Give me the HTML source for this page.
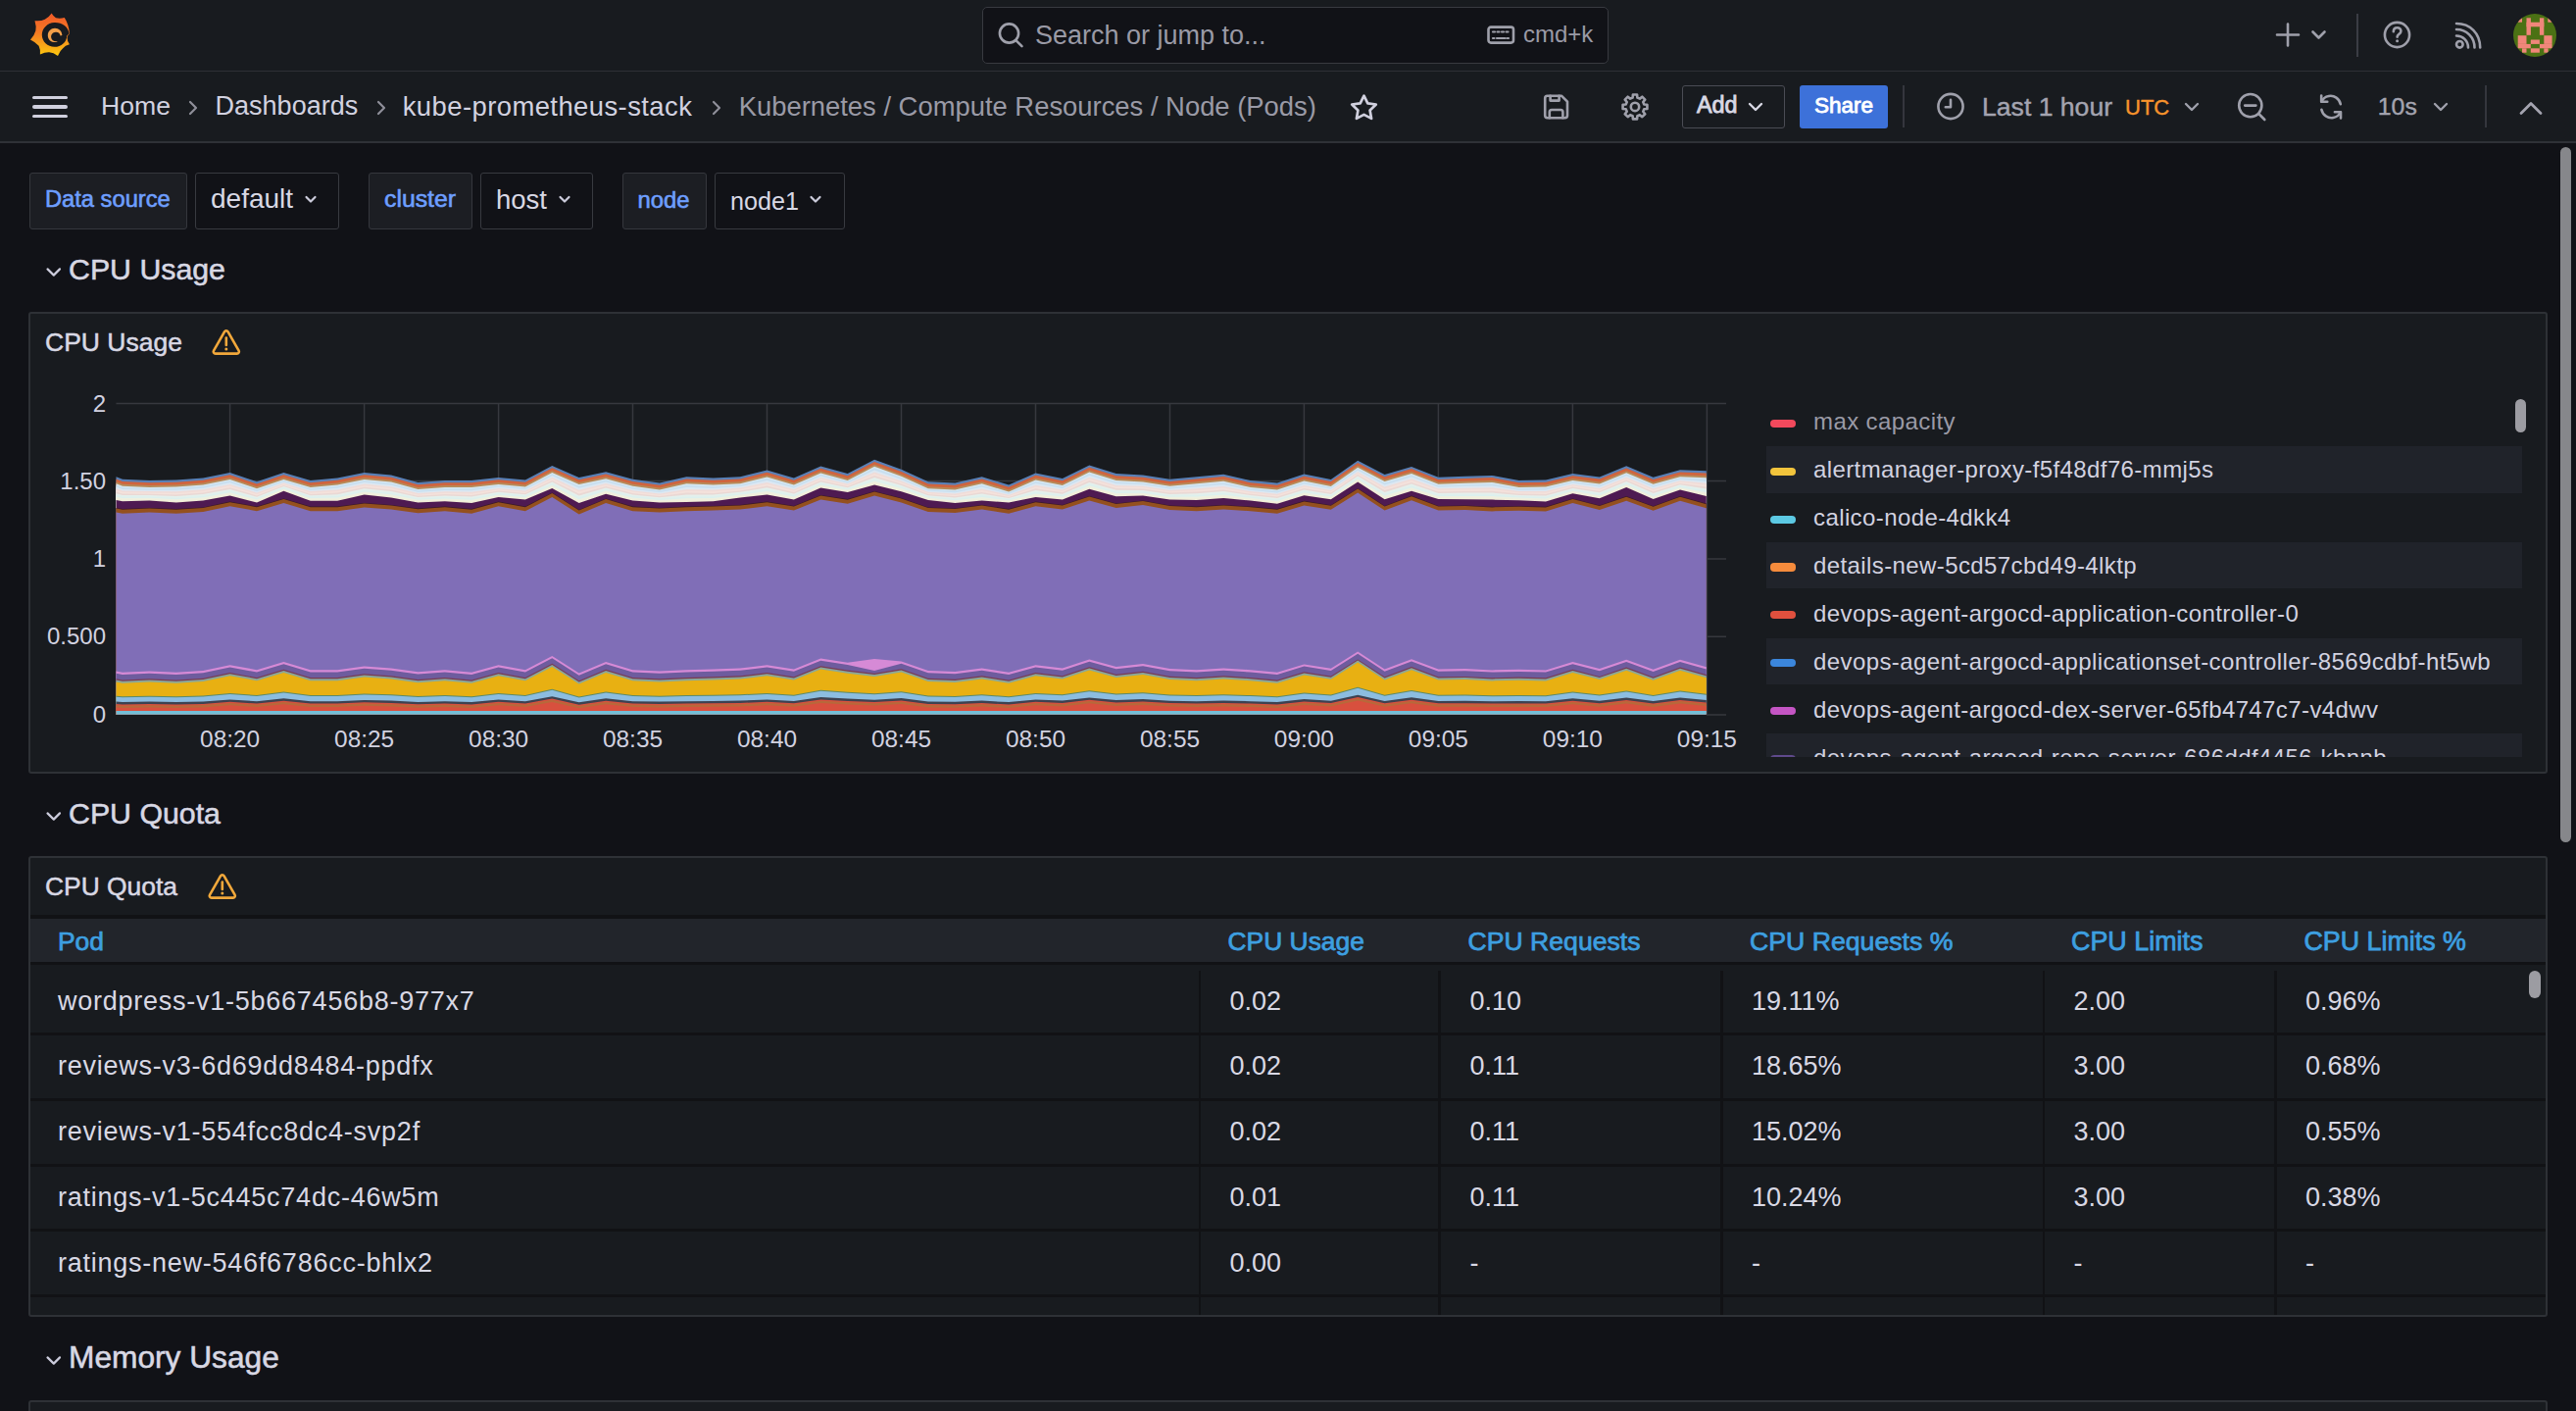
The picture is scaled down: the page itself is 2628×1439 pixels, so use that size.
<!DOCTYPE html>
<html><head><meta charset="utf-8">
<style>
*{box-sizing:border-box;margin:0;padding:0}
html,body{width:2628px;height:1439px;overflow:hidden;background:#111217}
body{position:relative;font-family:"Liberation Sans",sans-serif;color:#ccccdc}
.a{position:absolute;white-space:pre}
.t{position:absolute;white-space:pre;line-height:1}
svg{position:absolute;overflow:visible}
.bar{position:absolute;left:0;width:2628px;background:#181b1f}
.ic{fill:none;stroke:#9fa0ab;stroke-width:2.6;stroke-linecap:round;stroke-linejoin:round}
</style></head><body>
<!-- top bar -->
<div class="bar" style="top:0;height:72px"></div>
<div class="a" style="left:0;top:71.5px;width:2628px;height:1.5px;background:#2e3036"></div>
<div class="bar" style="top:73px;height:72px"></div>
<div class="a" style="left:0;top:144.2px;width:2628px;height:2px;background:#2f3137"></div>

<svg style="left:0;top:0" width="100" height="72" viewBox="0 0 100 72">
<defs><linearGradient id="lg" x1="0" y1="0" x2="0" y2="1"><stop offset="0" stop-color="#f05a28"/><stop offset="0.45" stop-color="#f47a24"/><stop offset="1" stop-color="#fbc80e"/></linearGradient></defs>
<path d="M52.6,13.6 Q54.7,17.2 57.0,18.2 Q60.9,19.2 65.8,18.0 C68.6,22.5 70.6,28 70.9,34.6 Q68.4,36.5 68.6,38.4 Q68.4,41.4 70.9,45.2 Q66.4,46.4 64.2,49.2 Q60.9,51.8 59.0,56.9 Q54.5,53.6 50.2,53.2 Q46.1,53.0 40.9,55.6 Q41.3,50.1 39.6,46.8 Q36.7,43.1 31.0,40.4 Q35.2,35.9 36.4,31.2 Q37.3,27.1 35.5,21.2 Q41.6,21.8 45.8,19.8 Q49.5,18.3 52.6,13.6Z" fill="url(#lg)"/>
<path d="M70.6,34.2 C69.4,27 63.4,22.8 55.6,23 C48.4,23.2 42.8,29 42.8,35.6 C42.8,42.6 48.6,47.8 55.6,47.8 C62.4,47.8 68.2,42.8 68.2,36.4 Z" fill="#181b1f"/>
<path d="M58.4,42.8 C54,44 49,41.4 48.8,36.4 C48.6,32 52,28.8 56,28.8 C60,28.8 63.2,31.8 63.4,36 L61.6,36.4 C61.2,34.4 59.6,32.6 56.8,32.8 C53.8,33 51.8,35.6 52.2,38.2 C52.6,41 55.4,42.8 58.4,42.2 Z" fill="#f3a04a"/>
</svg>

<!-- search box -->
<div class="a" style="left:1002px;top:7px;width:639px;height:58px;background:#111217;border:1.5px solid #383a40;border-radius:5px"></div>
<svg style="left:1016px;top:21px" width="32" height="32" viewBox="0 0 32 32"><circle cx="13.5" cy="13" r="9.6" class="ic" stroke-width="2.8"/><path d="M20.6,20.3 L26.5,26.2" class="ic" stroke-width="2.8"/></svg>
<div class="t" style="left:1056px;top:23px;font-size:27px;color:#9a9aa6">Search or jump to...</div>
<svg style="left:1515px;top:25px" width="32" height="22" viewBox="0 0 32 22">
<rect x="3.5" y="2.6" width="25.5" height="16" rx="2.5" class="ic" stroke-width="2.4"/>
<path d="M8,7.5h2 M12.5,7.5h2 M17,7.5h2 M21.5,7.5h2 M8,14h1.5 M12,14h8.5 M22.5,14h1.5" stroke="#9fa0ab" stroke-width="2.2" stroke-linecap="round"/>
</svg>
<div class="t" style="left:1554px;top:22.5px;font-size:24px;color:#9a9aa6">cmd+k</div>

<!-- right icons -->
<svg style="left:2318px;top:18px" width="60" height="36" viewBox="0 0 60 36">
<path d="M16,6.5 V28.5 M5,17.5 H27" class="ic" stroke-width="2.8"/>
<path d="M41.5,14.5 L47.5,20.5 L53.5,14.5" class="ic" stroke-width="2.6"/>
</svg>
<div class="a" style="left:2404px;top:14px;width:1.5px;height:44px;background:#3b3d44"></div>
<svg style="left:2428px;top:18px" width="36" height="36" viewBox="0 0 36 36">
<circle cx="17.5" cy="17.5" r="12.6" class="ic" stroke-width="2.6"/>
<path d="M13.8,14.2 C13.8,11.6 15.6,10.3 17.6,10.3 C19.8,10.3 21.4,11.8 21.4,13.7 C21.4,16.6 17.8,16.8 17.6,19.6" class="ic" stroke-width="2.5"/>
<circle cx="17.6" cy="23.8" r="1.5" fill="#9fa0ab"/>
</svg>
<svg style="left:2500px;top:20px" width="36" height="34" viewBox="0 0 36 34">
<circle cx="9.3" cy="25.3" r="3.3" class="ic" stroke-width="2.6"/>
<path d="M6,16.5 C12.5,16.5 18,21.5 18,28.5" class="ic" stroke-width="2.6"/>
<path d="M6,10 C16.5,10 24.5,18 24.5,28.5" class="ic" stroke-width="2.6"/>
<path d="M6,4 C20,4 30.2,14 30.2,28.5" class="ic" stroke-width="2.6"/>
</svg>
<svg style="left:2564px;top:13.6px" width="44" height="44" viewBox="0 0 44 44">
<defs><clipPath id="av"><circle cx="22" cy="22" r="22"/></clipPath></defs>
<g clip-path="url(#av)">
<rect width="44" height="44" fill="#4b7114"/>
<g fill="#f0867a"><rect x="4.7" y="4.3" width="4.3" height="4.4"/><rect x="35.3" y="4.3" width="4.3" height="4.4"/><rect x="13.5" y="4.3" width="4.4" height="17.5"/><rect x="26.9" y="4.3" width="4.4" height="17.5"/><rect x="13.5" y="8.7" width="17.8" height="4.6"/><rect x="4.7" y="22.2" width="8.8" height="8.7"/><rect x="31.3" y="22.2" width="8.3" height="8.7"/><rect x="17.8" y="26.5" width="9.1" height="4.4"/><rect x="4.7" y="30.9" width="13.1" height="4.4"/><rect x="26.9" y="30.9" width="12.7" height="4.4"/><rect x="9" y="35.3" width="4.5" height="4.4"/><rect x="17.8" y="35.3" width="9.1" height="4.4"/><rect x="31.3" y="35.3" width="4.3" height="4.4"/>
</g></g>
</svg>


<!-- hamburger -->
<div class="a" style="left:33px;top:97.5px;width:36px;height:3.6px;background:#d0d0de;border-radius:2px"></div>
<div class="a" style="left:33px;top:107px;width:36px;height:3.6px;background:#d0d0de;border-radius:2px"></div>
<div class="a" style="left:33px;top:116.5px;width:36px;height:3.6px;background:#d0d0de;border-radius:2px"></div>
<div class="t" style="left:103px;top:94.6px;font-size:26.6px;color:#d2d2e0">Home</div>
<svg style="left:190px;top:100px" width="14" height="20" viewBox="0 0 14 20"><path d="M4,4 L10,10 L4,16" fill="none" stroke="#8e8f99" stroke-width="2.2" stroke-linecap="round" stroke-linejoin="round"/></svg>
<div class="t" style="left:219.6px;top:94.6px;font-size:27px;color:#d2d2e0">Dashboards</div>
<svg style="left:382px;top:100px" width="14" height="20" viewBox="0 0 14 20"><path d="M4,4 L10,10 L4,16" fill="none" stroke="#8e8f99" stroke-width="2.2" stroke-linecap="round" stroke-linejoin="round"/></svg>
<div class="t" style="left:410.7px;top:94.6px;font-size:27.4px;letter-spacing:0.45px;color:#d2d2e0">kube-prometheus-stack</div>
<svg style="left:724px;top:100px" width="14" height="20" viewBox="0 0 14 20"><path d="M4,4 L10,10 L4,16" fill="none" stroke="#8e8f99" stroke-width="2.2" stroke-linecap="round" stroke-linejoin="round"/></svg>
<div class="t" style="left:753.7px;top:94.6px;font-size:27.4px;color:#9a9aa6">Kubernetes / Compute Resources / Node (Pods)</div>
<!-- star -->
<svg style="left:1372px;top:91px" width="40" height="38" viewBox="0 0 40 38">
<path d="M19.5,6.6 L23.3,14.3 L31.8,15.5 L25.6,21.5 L27.1,29.9 L19.5,25.9 L11.9,29.9 L13.4,21.5 L7.2,15.5 L15.7,14.3 Z" fill="none" stroke="#d0d0de" stroke-width="2.7" stroke-linejoin="round"/>
</svg>
<!-- save -->
<svg style="left:1570px;top:91px" width="36" height="36" viewBox="0 0 36 36">
<path d="M8.6,6.8 H23.2 L29,12.6 V26.8 C29,28.3 28.1,29.2 26.6,29.2 H8.6 C7.1,29.2 6.2,28.3 6.2,26.8 V9.2 C6.2,7.7 7.1,6.8 8.6,6.8 Z" class="ic" stroke-width="2.5"/>
<path d="M11.6,6.8 V11.6 H20.6 V6.8 M10.8,29.2 V23.2 C10.8,21.8 11.6,21 13,21 H22.2 C23.6,21 24.4,21.8 24.4,23.2 V29.2" class="ic" stroke-width="2.5"/>
</svg>
<!-- gear -->
<svg style="left:1650px;top:91px" width="36" height="36" viewBox="0 0 36 36">
<path d="M15.60,8.61 L15.92,5.47 L20.08,5.47 L20.40,8.61 L22.87,9.63 L25.32,7.64 L28.26,10.58 L26.27,13.03 L27.29,15.50 L30.43,15.82 L30.43,19.98 L27.29,20.30 L26.27,22.77 L28.26,25.22 L25.32,28.16 L22.87,26.17 L20.40,27.19 L20.08,30.33 L15.92,30.33 L15.60,27.19 L13.13,26.17 L10.68,28.16 L7.74,25.22 L9.73,22.77 L8.71,20.30 L5.57,19.98 L5.57,15.82 L8.71,15.50 L9.73,13.03 L7.74,10.58 L10.68,7.64 L13.13,9.63Z" class="ic" stroke-width="2.4"/>
<circle cx="18" cy="17.9" r="4.2" class="ic" stroke-width="2.5"/>
</svg>
<!-- Add button -->
<div class="a" style="left:1715.5px;top:87px;width:105.5px;height:43.5px;border:1.5px solid #4a4c54;border-radius:3px;background:#181b1f"></div>
<div class="t" style="left:1731px;top:96.0px;font-size:23.3px;-webkit-text-stroke:0.85px #d8d8e4;color:#d8d8e4">Add</div>
<svg style="left:1780px;top:100px" width="22" height="18" viewBox="0 0 22 18"><path d="M5,6 L11,12 L17,6" fill="none" stroke="#d8d8e4" stroke-width="2.4" stroke-linecap="round" stroke-linejoin="round"/></svg>
<!-- Share -->
<div class="a" style="left:1836.2px;top:86.5px;width:90px;height:44.2px;background:#3d71d9;border-radius:3px"></div>
<div class="t" style="left:1851px;top:96.7px;font-size:22.5px;-webkit-text-stroke:0.85px #ffffff;color:#ffffff">Share</div>
<div class="a" style="left:1941px;top:87px;width:1.5px;height:43px;background:#34363d"></div>
<!-- clock -->
<svg style="left:1972px;top:91px" width="36" height="36" viewBox="0 0 36 36">
<circle cx="18" cy="17.5" r="12.6" class="ic" stroke-width="2.6"/>
<path d="M18,10.8 V18.2 H12.8" class="ic" stroke-width="2.6"/>
</svg>
<div class="t" style="left:2022px;top:95.5px;font-size:26.6px;-webkit-text-stroke:0.4px #a4a4b0;color:#a4a4b0">Last 1 hour</div>
<div class="t" style="left:2168px;top:99.4px;font-size:22px;-webkit-text-stroke:0.4px #f7932c;color:#f7932c">UTC</div>
<svg style="left:2225px;top:100px" width="22" height="18" viewBox="0 0 22 18"><path d="M5,6 L11,12 L17,6" fill="none" stroke="#9fa0ab" stroke-width="2.4" stroke-linecap="round" stroke-linejoin="round"/></svg>
<!-- zoom out -->
<svg style="left:2279px;top:91px" width="36" height="36" viewBox="0 0 36 36">
<circle cx="16.8" cy="16.6" r="11.6" class="ic" stroke-width="2.6"/>
<path d="M25.3,25 L31.3,31 M11.2,16.6 H22.4" class="ic" stroke-width="2.6"/>
</svg>
<!-- refresh -->
<svg style="left:2360px;top:91px" width="36" height="36" viewBox="0 0 36 36">
<path d="M27.8,15.2 C26.7,9.6 21.3,6 15.8,7 C12.4,7.6 9.6,10 8.6,12.6 M8.4,20.8 C9.5,26.4 14.9,30 20.4,29 C23.8,28.4 26.6,26 27.6,23.4" class="ic" stroke-width="2.6"/>
<path d="M8.2,6.5 V12.8 H14.3 M28,29.5 V23.2 H21.9" class="ic" stroke-width="2.6"/>
</svg>
<div class="t" style="left:2425.8px;top:97px;font-size:24.8px;-webkit-text-stroke:0.4px #a4a4b0;color:#a4a4b0">10s</div>
<svg style="left:2479px;top:100px" width="22" height="18" viewBox="0 0 22 18"><path d="M5,6 L11,12 L17,6" fill="none" stroke="#9fa0ab" stroke-width="2.4" stroke-linecap="round" stroke-linejoin="round"/></svg>
<div class="a" style="left:2535px;top:86.5px;width:1.5px;height:43.5px;background:#34363d"></div>
<svg style="left:2566px;top:98px" width="32" height="24" viewBox="0 0 32 24"><path d="M6,17.5 L16,7.5 L26,17.5" fill="none" stroke="#a4a4b0" stroke-width="2.8" stroke-linecap="round" stroke-linejoin="round"/></svg>


<!-- variables -->
<div class="a" style="left:29.5px;top:175.5px;width:161px;height:58px;background:#1c1e23;border:1.5px solid #35373d;border-radius:3px"></div>
<div class="t" style="left:46px;top:191.9px;font-size:23.7px;-webkit-text-stroke:0.6px #6e9fff;color:#6e9fff">Data source</div>
<div class="a" style="left:198.7px;top:175.5px;width:147px;height:58px;background:#111217;border:1.5px solid #383a40;border-radius:3px"></div>
<div class="t" style="left:215px;top:189.3px;font-size:28px;color:#d8d8e4">default</div>
<svg style="left:306px;top:195px" width="22" height="18" viewBox="0 0 22 18"><path d="M6.5,6 L11,10.5 L15.5,6" fill="none" stroke="#ccccdc" stroke-width="2.2" stroke-linecap="round" stroke-linejoin="round"/></svg>

<div class="a" style="left:375.5px;top:175.5px;width:106px;height:58px;background:#1c1e23;border:1.5px solid #35373d;border-radius:3px"></div>
<div class="t" style="left:392px;top:191px;font-size:24.8px;-webkit-text-stroke:0.6px #6e9fff;color:#6e9fff">cluster</div>
<div class="a" style="left:489.5px;top:175.5px;width:115.5px;height:58px;background:#111217;border:1.5px solid #383a40;border-radius:3px"></div>
<div class="t" style="left:506px;top:189.7px;font-size:27.5px;color:#d8d8e4">host</div>
<svg style="left:565px;top:195px" width="22" height="18" viewBox="0 0 22 18"><path d="M6.5,6 L11,10.5 L15.5,6" fill="none" stroke="#ccccdc" stroke-width="2.2" stroke-linecap="round" stroke-linejoin="round"/></svg>

<div class="a" style="left:634.7px;top:175.5px;width:86px;height:58px;background:#1c1e23;border:1.5px solid #35373d;border-radius:3px"></div>
<div class="t" style="left:650.6px;top:191.9px;font-size:23.8px;-webkit-text-stroke:0.6px #6e9fff;color:#6e9fff">node</div>
<div class="a" style="left:728.5px;top:175.5px;width:133px;height:58px;background:#111217;border:1.5px solid #383a40;border-radius:3px"></div>
<div class="t" style="left:745px;top:192.7px;font-size:25.2px;color:#d8d8e4">node1</div>
<svg style="left:821px;top:195px" width="22" height="18" viewBox="0 0 22 18"><path d="M6.5,6 L11,10.5 L15.5,6" fill="none" stroke="#ccccdc" stroke-width="2.2" stroke-linecap="round" stroke-linejoin="round"/></svg>

<!-- section CPU Usage -->
<svg style="left:44px;top:268px" width="22" height="18" viewBox="0 0 22 18"><path d="M4.5,6.4 L10.8,12.6 L17,6.4" fill="none" stroke="#ccccdc" stroke-width="2.2" stroke-linecap="round" stroke-linejoin="round"/></svg>
<div class="t" style="left:70px;top:260.1px;font-size:30.3px;-webkit-text-stroke:0.55px #d8d8e4;color:#d8d8e4">CPU Usage</div>
<!-- section CPU Quota -->
<svg style="left:44px;top:823px" width="22" height="18" viewBox="0 0 22 18"><path d="M4.5,6.4 L10.8,12.6 L17,6.4" fill="none" stroke="#ccccdc" stroke-width="2.2" stroke-linecap="round" stroke-linejoin="round"/></svg>
<div class="t" style="left:70px;top:815.4px;font-size:30.3px;-webkit-text-stroke:0.55px #d8d8e4;color:#d8d8e4">CPU Quota</div>
<!-- section Memory Usage -->
<svg style="left:44px;top:1378px" width="22" height="18" viewBox="0 0 22 18"><path d="M4.5,6.4 L10.8,12.6 L17,6.4" fill="none" stroke="#ccccdc" stroke-width="2.2" stroke-linecap="round" stroke-linejoin="round"/></svg>
<div class="t" style="left:70px;top:1369.4px;font-size:31.7px;-webkit-text-stroke:0.55px #d8d8e4;color:#d8d8e4">Memory Usage</div>
<!-- memory panel top -->
<div class="a" style="left:28.8px;top:1428px;width:2570px;height:40px;background:#181b1f;border:2px solid #2e3136;border-radius:3px"></div>


<!-- panel 1 -->
<div class="a" style="left:28.8px;top:317.6px;width:2570px;height:471px;background:#181b1f;border:2px solid #2e3136;border-radius:3px"></div>
<div class="t" style="left:46px;top:335.6px;font-size:26.5px;-webkit-text-stroke:0.5px #d8d8e4;color:#d8d8e4">CPU Usage</div>
<svg style="left:214px;top:333px" width="34" height="32" viewBox="0 0 34 32"><path d="M16.8,4.2 C17.6,4.2 18.2,4.6 18.6,5.3 L29.6,24.6 C30.4,26 29.4,27.6 27.8,27.6 H5.8 C4.2,27.6 3.2,26 4,24.6 L15,5.3 C15.4,4.6 16,4.2 16.8,4.2 Z" fill="none" stroke="#f1a83b" stroke-width="2.6" stroke-linejoin="round"/><path d="M16.8,11.5 V19" stroke="#f1a83b" stroke-width="2.6" stroke-linecap="round"/><circle cx="16.8" cy="23" r="1.5" fill="#f1a83b"/></svg>
<svg style="left:0;top:0" width="2628" height="1439" viewBox="0 0 2628 1439">
<path d="M118.5,411.5 H1761" stroke="#36383e" stroke-width="1.5"/><path d="M118.5,490.5 H1761" stroke="#36383e" stroke-width="1.5"/><path d="M118.5,570 H1761" stroke="#36383e" stroke-width="1.5"/><path d="M118.5,649.2 H1761" stroke="#36383e" stroke-width="1.5"/><path d="M234.6,411.5 V729" stroke="#36383e" stroke-width="1.5"/><path d="M371.6,411.5 V729" stroke="#36383e" stroke-width="1.5"/><path d="M508.6,411.5 V729" stroke="#36383e" stroke-width="1.5"/><path d="M645.5,411.5 V729" stroke="#36383e" stroke-width="1.5"/><path d="M782.5,411.5 V729" stroke="#36383e" stroke-width="1.5"/><path d="M919.5,411.5 V729" stroke="#36383e" stroke-width="1.5"/><path d="M1056.5,411.5 V729" stroke="#36383e" stroke-width="1.5"/><path d="M1193.5,411.5 V729" stroke="#36383e" stroke-width="1.5"/><path d="M1330.4,411.5 V729" stroke="#36383e" stroke-width="1.5"/><path d="M1467.4,411.5 V729" stroke="#36383e" stroke-width="1.5"/><path d="M1604.4,411.5 V729" stroke="#36383e" stroke-width="1.5"/><path d="M1741.4,411.5 V729" stroke="#36383e" stroke-width="1.5"/>
<path d="M118.5,486.2 L125.0,488.8 L152.4,490.0 L179.8,489.5 L207.2,487.5 L234.6,482.0 L262.0,491.2 L289.4,482.0 L316.8,490.0 L344.2,487.5 L371.6,482.0 L399.0,484.5 L426.4,492.0 L453.8,490.0 L481.1,490.0 L508.5,487.0 L535.9,489.5 L563.3,475.0 L590.7,487.0 L618.1,481.2 L645.5,488.8 L672.9,492.5 L700.3,486.2 L727.7,487.5 L755.1,486.2 L782.5,479.5 L809.9,487.5 L837.3,475.5 L864.7,483.0 L892.1,468.8 L919.5,478.8 L946.9,491.2 L974.3,492.5 L1001.7,486.2 L1029.1,494.5 L1056.5,482.5 L1083.9,488.0 L1111.3,474.5 L1138.7,483.0 L1166.0,484.5 L1193.4,488.8 L1220.8,486.2 L1248.2,483.8 L1275.6,490.0 L1303.0,492.5 L1330.4,483.6 L1357.8,488.9 L1385.2,469.8 L1412.6,484.0 L1440.0,475.9 L1467.4,486.8 L1494.8,485.8 L1522.2,484.9 L1549.6,490.1 L1577.0,489.6 L1604.4,483.0 L1631.8,486.4 L1659.2,475.2 L1686.6,486.8 L1714.0,479.3 L1740.8,480.2 L1740.8,728.8 L118.5,728.8Z" fill="#5a80b6"/>
<path d="M118.5,488.4 L125.0,490.9 L152.4,492.2 L179.8,491.7 L207.2,489.7 L234.6,484.2 L262.0,493.4 L289.4,484.2 L316.8,492.2 L344.2,489.7 L371.6,484.2 L399.0,486.7 L426.4,494.2 L453.8,492.2 L481.1,492.2 L508.5,489.2 L535.9,491.7 L563.3,477.2 L590.7,489.2 L618.1,483.4 L645.5,490.9 L672.9,494.7 L700.3,488.4 L727.7,489.7 L755.1,488.4 L782.5,481.7 L809.9,489.7 L837.3,477.7 L864.7,485.2 L892.1,470.9 L919.5,480.9 L946.9,493.4 L974.3,494.7 L1001.7,488.4 L1029.1,496.7 L1056.5,484.7 L1083.9,490.2 L1111.3,476.7 L1138.7,485.2 L1166.0,486.7 L1193.4,490.9 L1220.8,488.4 L1248.2,485.9 L1275.6,492.2 L1303.0,494.7 L1330.4,485.8 L1357.8,491.1 L1385.2,472.0 L1412.6,486.2 L1440.0,478.1 L1467.4,489.0 L1494.8,488.0 L1522.2,487.1 L1549.6,492.3 L1577.0,491.8 L1604.4,485.2 L1631.8,488.6 L1659.2,477.4 L1686.6,489.0 L1714.0,481.5 L1740.8,482.4 L1740.8,728.8 L118.5,728.8Z" fill="#d0643e"/>
<path d="M118.5,491.2 L125.0,493.8 L152.4,495.0 L179.8,494.5 L207.2,492.5 L234.6,487.0 L262.0,496.2 L289.4,487.0 L316.8,495.0 L344.2,492.5 L371.6,487.0 L399.0,489.5 L426.4,497.0 L453.8,495.0 L481.1,495.0 L508.5,492.0 L535.9,494.5 L563.3,480.0 L590.7,492.0 L618.1,486.2 L645.5,493.8 L672.9,497.5 L700.3,491.2 L727.7,492.5 L755.1,491.2 L782.5,484.5 L809.9,492.5 L837.3,480.5 L864.7,488.0 L892.1,473.8 L919.5,483.8 L946.9,496.2 L974.3,497.5 L1001.7,491.2 L1029.1,499.5 L1056.5,487.5 L1083.9,493.0 L1111.3,479.5 L1138.7,488.0 L1166.0,489.5 L1193.4,493.8 L1220.8,491.2 L1248.2,488.8 L1275.6,495.0 L1303.0,497.5 L1330.4,488.6 L1357.8,493.9 L1385.2,474.8 L1412.6,489.0 L1440.0,480.9 L1467.4,491.8 L1494.8,490.8 L1522.2,489.9 L1549.6,495.1 L1577.0,494.6 L1604.4,488.0 L1631.8,491.4 L1659.2,480.2 L1686.6,491.8 L1714.0,484.3 L1740.8,485.2 L1740.8,728.8 L118.5,728.8Z" fill="#b88a58"/>
<path d="M118.5,493.2 L125.0,495.8 L152.4,497.0 L179.8,496.5 L207.2,494.5 L234.6,489.0 L262.0,498.2 L289.4,489.0 L316.8,497.0 L344.2,494.5 L371.6,489.0 L399.0,491.5 L426.4,499.0 L453.8,497.0 L481.1,497.0 L508.5,494.0 L535.9,496.5 L563.3,482.0 L590.7,494.0 L618.1,488.2 L645.5,495.8 L672.9,499.5 L700.3,493.2 L727.7,494.5 L755.1,493.2 L782.5,486.5 L809.9,494.5 L837.3,482.5 L864.7,490.0 L892.1,475.8 L919.5,485.8 L946.9,498.2 L974.3,499.5 L1001.7,493.2 L1029.1,501.5 L1056.5,489.5 L1083.9,495.0 L1111.3,481.5 L1138.7,490.0 L1166.0,491.5 L1193.4,495.8 L1220.8,493.2 L1248.2,490.8 L1275.6,497.0 L1303.0,499.5 L1330.4,490.6 L1357.8,495.9 L1385.2,476.8 L1412.6,491.0 L1440.0,482.9 L1467.4,493.8 L1494.8,492.8 L1522.2,491.9 L1549.6,497.1 L1577.0,496.6 L1604.4,490.0 L1631.8,493.4 L1659.2,482.2 L1686.6,493.8 L1714.0,486.3 L1740.8,487.2 L1740.8,728.8 L118.5,728.8Z" fill="#d4e6f0"/>
<path d="M118.5,494.9 L125.0,497.3 L152.4,498.4 L179.8,498.1 L207.2,496.1 L234.6,490.6 L262.0,499.7 L289.4,490.2 L316.8,498.4 L344.2,496.1 L371.6,490.6 L399.0,493.1 L426.4,500.4 L453.8,498.4 L481.1,498.6 L508.5,495.3 L535.9,497.8 L563.3,483.6 L590.7,495.9 L618.1,489.8 L645.5,497.2 L672.9,500.8 L700.3,495.1 L727.7,496.2 L755.1,494.7 L782.5,488.3 L809.9,496.0 L837.3,484.0 L864.7,491.2 L892.1,477.6 L919.5,487.3 L946.9,499.4 L974.3,500.9 L1001.7,495.0 L1029.1,502.6 L1056.5,491.2 L1083.9,496.4 L1111.3,483.2 L1138.7,491.6 L1166.0,492.9 L1193.4,497.1 L1220.8,494.9 L1248.2,492.5 L1275.6,498.4 L1303.0,500.9 L1330.4,492.1 L1357.8,497.2 L1385.2,478.3 L1412.6,492.8 L1440.0,484.7 L1467.4,495.3 L1494.8,494.4 L1522.2,493.7 L1549.6,498.4 L1577.0,498.1 L1604.4,491.3 L1631.8,494.9 L1659.2,483.7 L1686.6,495.3 L1714.0,487.6 L1740.8,489.1 L1740.8,728.8 L118.5,728.8Z" fill="#c8dff0"/>
<path d="M118.5,496.6 L125.0,498.9 L152.4,499.7 L179.8,499.7 L207.2,497.7 L234.6,492.3 L262.0,501.1 L289.4,491.4 L316.8,499.8 L344.2,497.8 L371.6,492.1 L399.0,494.7 L426.4,501.7 L453.8,499.9 L481.1,500.2 L508.5,496.6 L535.9,499.1 L563.3,485.2 L590.7,497.8 L618.1,491.4 L645.5,498.7 L672.9,502.1 L700.3,497.0 L727.7,497.9 L755.1,496.1 L782.5,490.1 L809.9,497.5 L837.3,485.5 L864.7,492.4 L892.1,479.5 L919.5,488.9 L946.9,500.6 L974.3,502.2 L1001.7,496.7 L1029.1,503.7 L1056.5,493.0 L1083.9,497.9 L1111.3,484.9 L1138.7,493.2 L1166.0,494.3 L1193.4,498.5 L1220.8,496.6 L1248.2,494.2 L1275.6,499.7 L1303.0,502.4 L1330.4,493.5 L1357.8,498.6 L1385.2,479.7 L1412.6,494.6 L1440.0,486.5 L1467.4,496.8 L1494.8,496.1 L1522.2,495.4 L1549.6,499.7 L1577.0,499.6 L1604.4,492.6 L1631.8,496.4 L1659.2,485.2 L1686.6,496.8 L1714.0,488.9 L1740.8,490.9 L1740.8,728.8 L118.5,728.8Z" fill="#dde8f2"/>
<path d="M118.5,498.3 L125.0,500.4 L152.4,501.1 L179.8,501.3 L207.2,499.3 L234.6,493.9 L262.0,502.5 L289.4,492.5 L316.8,501.1 L344.2,499.4 L371.6,493.6 L399.0,496.3 L426.4,503.1 L453.8,501.3 L481.1,501.8 L508.5,497.9 L535.9,500.4 L563.3,486.8 L590.7,499.7 L618.1,492.9 L645.5,500.2 L672.9,503.4 L700.3,498.9 L727.7,499.5 L755.1,497.5 L782.5,491.9 L809.9,499.0 L837.3,487.0 L864.7,493.6 L892.1,481.4 L919.5,490.4 L946.9,501.8 L974.3,503.6 L1001.7,498.4 L1029.1,504.8 L1056.5,494.8 L1083.9,499.4 L1111.3,486.7 L1138.7,494.9 L1166.0,495.7 L1193.4,499.9 L1220.8,498.3 L1248.2,495.9 L1275.6,501.1 L1303.0,503.8 L1330.4,495.0 L1357.8,499.9 L1385.2,481.2 L1412.6,496.5 L1440.0,488.3 L1467.4,498.3 L1494.8,497.7 L1522.2,497.2 L1549.6,501.0 L1577.0,501.1 L1604.4,494.0 L1631.8,497.9 L1659.2,486.7 L1686.6,498.3 L1714.0,490.3 L1740.8,492.8 L1740.8,728.8 L118.5,728.8Z" fill="#f0dcd8"/>
<path d="M118.5,499.9 L125.0,501.9 L152.4,502.4 L179.8,502.9 L207.2,500.9 L234.6,495.6 L262.0,503.9 L289.4,493.7 L316.8,502.5 L344.2,501.0 L371.6,495.2 L399.0,497.9 L426.4,504.4 L453.8,502.7 L481.1,503.4 L508.5,499.2 L535.9,501.7 L563.3,488.4 L590.7,501.6 L618.1,494.4 L645.5,501.6 L672.9,504.7 L700.3,500.8 L727.7,501.2 L755.1,498.9 L782.5,493.7 L809.9,500.5 L837.3,488.5 L864.7,494.8 L892.1,483.2 L919.5,491.9 L946.9,502.9 L974.3,504.9 L1001.7,500.1 L1029.1,505.9 L1056.5,496.5 L1083.9,500.8 L1111.3,488.4 L1138.7,496.5 L1166.0,497.1 L1193.4,501.2 L1220.8,499.9 L1248.2,497.6 L1275.6,502.4 L1303.0,505.2 L1330.4,496.4 L1357.8,501.2 L1385.2,482.6 L1412.6,498.3 L1440.0,490.1 L1467.4,499.8 L1494.8,499.4 L1522.2,499.0 L1549.6,502.3 L1577.0,502.6 L1604.4,495.3 L1631.8,499.4 L1659.2,488.2 L1686.6,499.8 L1714.0,491.6 L1740.8,494.7 L1740.8,728.8 L118.5,728.8Z" fill="#f4e2dc"/>
<path d="M118.5,501.6 L125.0,503.5 L152.4,503.8 L179.8,504.5 L207.2,502.5 L234.6,497.2 L262.0,505.4 L289.4,494.9 L316.8,503.9 L344.2,502.6 L371.6,496.8 L399.0,499.5 L426.4,505.8 L453.8,504.1 L481.1,505.0 L508.5,500.5 L535.9,503.0 L563.3,490.0 L590.7,503.5 L618.1,496.0 L645.5,503.1 L672.9,506.0 L700.3,502.6 L727.7,502.9 L755.1,500.4 L782.5,495.5 L809.9,502.0 L837.3,490.0 L864.7,496.0 L892.1,485.1 L919.5,493.5 L946.9,504.1 L974.3,506.2 L1001.7,501.9 L1029.1,507.0 L1056.5,498.2 L1083.9,502.2 L1111.3,490.1 L1138.7,498.1 L1166.0,498.5 L1193.4,502.6 L1220.8,501.6 L1248.2,499.4 L1275.6,503.8 L1303.0,506.6 L1330.4,497.9 L1357.8,502.5 L1385.2,484.1 L1412.6,500.1 L1440.0,491.9 L1467.4,501.4 L1494.8,501.0 L1522.2,500.8 L1549.6,503.6 L1577.0,504.1 L1604.4,496.6 L1631.8,500.9 L1659.2,489.6 L1686.6,501.4 L1714.0,492.9 L1740.8,496.5 L1740.8,728.8 L118.5,728.8Z" fill="#ead8d4"/>
<path d="M118.5,503.3 L125.0,505.1 L152.4,505.1 L179.8,506.1 L207.2,504.1 L234.6,498.9 L262.0,506.8 L289.4,496.1 L316.8,505.2 L344.2,504.2 L371.6,498.3 L399.0,501.1 L426.4,507.1 L453.8,505.6 L481.1,506.6 L508.5,501.8 L535.9,504.3 L563.3,491.6 L590.7,505.4 L618.1,497.6 L645.5,504.6 L672.9,507.3 L700.3,504.5 L727.7,504.6 L755.1,501.8 L782.5,497.3 L809.9,503.5 L837.3,491.5 L864.7,497.2 L892.1,487.0 L919.5,495.1 L946.9,505.3 L974.3,507.6 L1001.7,503.6 L1029.1,508.1 L1056.5,500.0 L1083.9,503.7 L1111.3,491.9 L1138.7,499.8 L1166.0,499.9 L1193.4,504.0 L1220.8,503.3 L1248.2,501.1 L1275.6,505.1 L1303.0,508.1 L1330.4,499.4 L1357.8,503.9 L1385.2,485.6 L1412.6,501.9 L1440.0,493.6 L1467.4,502.9 L1494.8,502.6 L1522.2,502.5 L1549.6,505.0 L1577.0,505.5 L1604.4,497.9 L1631.8,502.3 L1659.2,491.1 L1686.6,502.9 L1714.0,494.2 L1740.8,498.4 L1740.8,728.8 L118.5,728.8Z" fill="#e4f0ec"/>
<path d="M118.5,505.0 L125.0,506.6 L152.4,506.4 L179.8,507.7 L207.2,505.7 L234.6,500.6 L262.0,508.2 L289.4,497.2 L316.8,506.6 L344.2,505.9 L371.6,499.9 L399.0,502.7 L426.4,508.4 L453.8,507.0 L481.1,508.2 L508.5,503.1 L535.9,505.6 L563.3,493.2 L590.7,507.3 L618.1,499.1 L645.5,506.1 L672.9,508.6 L700.3,506.4 L727.7,506.2 L755.1,503.2 L782.5,499.1 L809.9,505.0 L837.3,493.0 L864.7,498.4 L892.1,488.9 L919.5,496.6 L946.9,506.5 L974.3,508.9 L1001.7,505.3 L1029.1,509.2 L1056.5,501.8 L1083.9,505.1 L1111.3,493.6 L1138.7,501.4 L1166.0,501.3 L1193.4,505.4 L1220.8,505.0 L1248.2,502.8 L1275.6,506.4 L1303.0,509.5 L1330.4,500.8 L1357.8,505.2 L1385.2,487.0 L1412.6,503.7 L1440.0,495.4 L1467.4,504.4 L1494.8,504.3 L1522.2,504.3 L1549.6,506.3 L1577.0,507.0 L1604.4,499.2 L1631.8,503.8 L1659.2,492.6 L1686.6,504.4 L1714.0,495.5 L1740.8,500.3 L1740.8,728.8 L118.5,728.8Z" fill="#dcf0ee"/>
<path d="M118.5,506.6 L125.0,508.1 L152.4,507.8 L179.8,509.3 L207.2,507.3 L234.6,502.2 L262.0,509.6 L289.4,498.4 L316.8,508.0 L344.2,507.5 L371.6,501.4 L399.0,504.3 L426.4,509.8 L453.8,508.4 L481.1,509.8 L508.5,504.4 L535.9,506.9 L563.3,494.8 L590.7,509.2 L618.1,500.6 L645.5,507.6 L672.9,509.9 L700.3,508.2 L727.7,507.9 L755.1,504.6 L782.5,500.9 L809.9,506.5 L837.3,494.5 L864.7,499.6 L892.1,490.8 L919.5,498.1 L946.9,507.6 L974.3,510.3 L1001.7,507.1 L1029.1,510.3 L1056.5,503.5 L1083.9,506.6 L1111.3,495.3 L1138.7,503.0 L1166.0,502.7 L1193.4,506.8 L1220.8,506.6 L1248.2,504.6 L1275.6,507.8 L1303.0,510.9 L1330.4,502.3 L1357.8,506.5 L1385.2,488.5 L1412.6,505.6 L1440.0,497.2 L1467.4,505.9 L1494.8,505.9 L1522.2,506.1 L1549.6,507.6 L1577.0,508.5 L1604.4,500.6 L1631.8,505.3 L1659.2,494.1 L1686.6,505.9 L1714.0,496.9 L1740.8,502.2 L1740.8,728.8 L118.5,728.8Z" fill="#eef0e0"/>
<path d="M118.5,508.3 L125.0,509.7 L152.4,509.1 L179.8,510.9 L207.2,508.9 L234.6,503.9 L262.0,511.1 L289.4,499.6 L316.8,509.4 L344.2,509.1 L371.6,502.9 L399.0,505.9 L426.4,511.1 L453.8,509.8 L481.1,511.4 L508.5,505.7 L535.9,508.2 L563.3,496.4 L590.7,511.1 L618.1,502.2 L645.5,509.0 L672.9,511.2 L700.3,510.1 L727.7,509.6 L755.1,506.1 L782.5,502.7 L809.9,508.0 L837.3,496.0 L864.7,500.8 L892.1,492.6 L919.5,499.7 L946.9,508.8 L974.3,511.6 L1001.7,508.8 L1029.1,511.4 L1056.5,505.2 L1083.9,508.1 L1111.3,497.0 L1138.7,504.6 L1166.0,504.1 L1193.4,508.1 L1220.8,508.3 L1248.2,506.3 L1275.6,509.1 L1303.0,512.3 L1330.4,503.7 L1357.8,507.9 L1385.2,489.9 L1412.6,507.4 L1440.0,499.0 L1467.4,507.4 L1494.8,507.6 L1522.2,507.8 L1549.6,508.9 L1577.0,510.0 L1604.4,501.9 L1631.8,506.8 L1659.2,495.6 L1686.6,507.4 L1714.0,498.2 L1740.8,504.0 L1740.8,728.8 L118.5,728.8Z" fill="#f2eed8"/>
<path d="M118.5,510.0 L125.0,511.2 L152.4,510.5 L179.8,512.5 L207.2,510.5 L234.6,505.5 L262.0,512.5 L289.4,500.8 L316.8,510.8 L344.2,510.8 L371.6,504.5 L399.0,507.5 L426.4,512.5 L453.8,511.2 L481.1,513.0 L508.5,507.0 L535.9,509.5 L563.3,498.0 L590.7,513.0 L618.1,503.8 L645.5,510.5 L672.9,512.5 L700.3,512.0 L727.7,511.2 L755.1,507.5 L782.5,504.5 L809.9,509.5 L837.3,497.5 L864.7,502.0 L892.1,494.5 L919.5,501.2 L946.9,510.0 L974.3,513.0 L1001.7,510.5 L1029.1,512.5 L1056.5,507.0 L1083.9,509.5 L1111.3,498.8 L1138.7,506.2 L1166.0,505.5 L1193.4,509.5 L1220.8,510.0 L1248.2,508.0 L1275.6,510.5 L1303.0,513.8 L1330.4,505.2 L1357.8,509.2 L1385.2,491.4 L1412.6,509.2 L1440.0,500.8 L1467.4,508.9 L1494.8,509.2 L1522.2,509.6 L1549.6,510.2 L1577.0,511.5 L1604.4,503.2 L1631.8,508.3 L1659.2,497.1 L1686.6,508.9 L1714.0,499.5 L1740.8,505.9 L1740.8,728.8 L118.5,728.8Z" fill="#4e1a52"/>
<path d="M118.5,517.9 L125.0,519.1 L152.4,517.9 L179.8,519.1 L207.2,517.4 L234.6,511.6 L262.0,516.6 L289.4,508.4 L316.8,516.6 L344.2,516.6 L371.6,512.9 L399.0,514.9 L426.4,518.6 L453.8,516.6 L481.1,519.1 L508.5,511.6 L535.9,516.6 L563.3,502.4 L590.7,519.9 L618.1,508.4 L645.5,516.6 L672.9,517.9 L700.3,516.6 L727.7,515.9 L755.1,514.9 L782.5,511.6 L809.9,515.9 L837.3,504.9 L864.7,509.1 L892.1,500.9 L919.5,507.9 L946.9,517.4 L974.3,518.4 L1001.7,514.9 L1029.1,519.1 L1056.5,511.6 L1083.9,514.9 L1111.3,505.9 L1138.7,513.4 L1166.0,510.4 L1193.4,515.4 L1220.8,516.6 L1248.2,514.9 L1275.6,516.6 L1303.0,519.1 L1330.4,510.8 L1357.8,515.2 L1385.2,498.0 L1412.6,515.9 L1440.0,505.6 L1467.4,515.9 L1494.8,515.5 L1522.2,516.8 L1549.6,516.2 L1577.0,516.8 L1604.4,508.4 L1631.8,515.5 L1659.2,506.1 L1686.6,516.2 L1714.0,506.1 L1740.8,513.6 L1740.8,728.8 L118.5,728.8Z" fill="#3a1a24"/>
<path d="M118.5,518.5 L125.0,519.8 L152.4,518.5 L179.8,519.8 L207.2,518.0 L234.6,512.2 L262.0,517.2 L289.4,509.0 L316.8,517.2 L344.2,517.2 L371.6,513.5 L399.0,515.5 L426.4,519.2 L453.8,517.2 L481.1,519.8 L508.5,512.2 L535.9,517.2 L563.3,503.0 L590.7,520.5 L618.1,509.0 L645.5,517.2 L672.9,518.5 L700.3,517.2 L727.7,516.5 L755.1,515.5 L782.5,512.2 L809.9,516.5 L837.3,505.5 L864.7,509.8 L892.1,501.5 L919.5,508.5 L946.9,518.0 L974.3,519.0 L1001.7,515.5 L1029.1,519.8 L1056.5,512.2 L1083.9,515.5 L1111.3,506.5 L1138.7,514.0 L1166.0,511.0 L1193.4,516.0 L1220.8,517.2 L1248.2,515.5 L1275.6,517.2 L1303.0,519.8 L1330.4,511.4 L1357.8,515.8 L1385.2,498.6 L1412.6,516.5 L1440.0,506.2 L1467.4,516.5 L1494.8,516.1 L1522.2,517.4 L1549.6,516.8 L1577.0,517.4 L1604.4,509.0 L1631.8,516.1 L1659.2,506.7 L1686.6,516.8 L1714.0,506.7 L1740.8,514.2 L1740.8,728.8 L118.5,728.8Z" fill="#94501e"/>
<path d="M118.5,522.5 L125.0,523.8 L152.4,522.5 L179.8,523.8 L207.2,522.0 L234.6,516.2 L262.0,521.2 L289.4,513.0 L316.8,521.2 L344.2,521.2 L371.6,517.5 L399.0,519.5 L426.4,523.2 L453.8,521.2 L481.1,523.8 L508.5,516.2 L535.9,521.2 L563.3,507.0 L590.7,524.5 L618.1,513.0 L645.5,521.2 L672.9,522.5 L700.3,521.2 L727.7,520.5 L755.1,519.5 L782.5,516.2 L809.9,520.5 L837.3,509.5 L864.7,513.8 L892.1,505.5 L919.5,512.5 L946.9,522.0 L974.3,523.0 L1001.7,519.5 L1029.1,523.8 L1056.5,516.2 L1083.9,519.5 L1111.3,510.5 L1138.7,518.0 L1166.0,515.0 L1193.4,520.0 L1220.8,521.2 L1248.2,519.5 L1275.6,521.2 L1303.0,523.8 L1330.4,515.4 L1357.8,519.8 L1385.2,502.6 L1412.6,520.5 L1440.0,510.2 L1467.4,520.5 L1494.8,520.1 L1522.2,521.4 L1549.6,520.8 L1577.0,521.4 L1604.4,513.0 L1631.8,520.1 L1659.2,510.7 L1686.6,520.8 L1714.0,510.7 L1740.8,518.2 L1740.8,728.8 L118.5,728.8Z" fill="#806eb7"/>
<path d="M118.5,684.5 L125.0,685.8 L152.4,684.5 L179.8,685.8 L207.2,684.0 L234.6,678.2 L262.0,683.2 L289.4,675.0 L316.8,683.2 L344.2,683.2 L371.6,679.5 L399.0,681.5 L426.4,685.2 L453.8,683.2 L481.1,685.8 L508.5,678.2 L535.9,683.2 L563.3,669.0 L590.7,686.5 L618.1,675.0 L645.5,683.2 L672.9,684.5 L700.3,683.2 L727.7,682.5 L755.1,681.5 L782.5,678.2 L809.9,682.5 L837.3,671.5 L864.7,675.8 L892.1,672.0 L919.5,674.5 L946.9,684.0 L974.3,685.0 L1001.7,681.5 L1029.1,685.8 L1056.5,678.2 L1083.9,681.5 L1111.3,672.5 L1138.7,680.0 L1166.0,677.0 L1193.4,682.0 L1220.8,683.2 L1248.2,681.5 L1275.6,683.2 L1303.0,685.8 L1330.4,677.4 L1357.8,681.8 L1385.2,664.6 L1412.6,682.5 L1440.0,672.2 L1467.4,682.5 L1494.8,682.1 L1522.2,683.4 L1549.6,682.8 L1577.0,683.4 L1604.4,675.0 L1631.8,682.1 L1659.2,672.7 L1686.6,682.8 L1714.0,672.7 L1740.8,680.2 L1740.8,728.8 L118.5,728.8Z" fill="#d68ad6"/>
<path d="M118.5,686.7 L125.0,688.0 L152.4,686.7 L179.8,688.0 L207.2,686.2 L234.6,680.5 L262.0,685.5 L289.4,677.2 L316.8,685.5 L344.2,685.5 L371.6,681.7 L399.0,683.7 L426.4,687.5 L453.8,685.5 L481.1,688.0 L508.5,680.5 L535.9,685.5 L563.3,671.2 L590.7,688.7 L618.1,677.2 L645.5,685.5 L672.9,686.7 L700.3,685.5 L727.7,684.7 L755.1,683.7 L782.5,680.5 L809.9,684.7 L837.3,673.7 L864.7,678.0 L892.1,684.0 L919.5,676.7 L946.9,686.2 L974.3,687.2 L1001.7,683.7 L1029.1,688.0 L1056.5,680.5 L1083.9,683.7 L1111.3,674.7 L1138.7,682.2 L1166.0,679.2 L1193.4,684.2 L1220.8,685.5 L1248.2,683.7 L1275.6,685.5 L1303.0,688.0 L1330.4,679.6 L1357.8,684.0 L1385.2,666.8 L1412.6,684.7 L1440.0,674.4 L1467.4,684.7 L1494.8,684.3 L1522.2,685.6 L1549.6,685.0 L1577.0,685.6 L1604.4,677.2 L1631.8,684.3 L1659.2,674.9 L1686.6,685.0 L1714.0,674.9 L1740.8,682.4 L1740.8,728.8 L118.5,728.8Z" fill="#6e5c9e"/>
<path d="M118.5,692.3 L125.0,693.5 L152.4,692.3 L179.8,693.5 L207.2,691.8 L234.6,686.0 L262.0,691.0 L289.4,682.8 L316.8,691.0 L344.2,691.0 L371.6,687.3 L399.0,689.3 L426.4,693.0 L453.8,691.0 L481.1,693.5 L508.5,686.0 L535.9,691.0 L563.3,676.8 L590.7,694.3 L618.1,682.8 L645.5,691.0 L672.9,692.3 L700.3,691.0 L727.7,690.3 L755.1,689.3 L782.5,686.0 L809.9,690.3 L837.3,679.3 L864.7,683.5 L892.1,686.8 L919.5,682.3 L946.9,691.8 L974.3,692.8 L1001.7,689.3 L1029.1,693.5 L1056.5,686.0 L1083.9,689.3 L1111.3,680.3 L1138.7,687.8 L1166.0,684.8 L1193.4,689.8 L1220.8,691.0 L1248.2,689.3 L1275.6,691.0 L1303.0,693.5 L1330.4,685.2 L1357.8,689.6 L1385.2,672.4 L1412.6,690.3 L1440.0,680.0 L1467.4,690.3 L1494.8,689.9 L1522.2,691.2 L1549.6,690.6 L1577.0,691.2 L1604.4,682.8 L1631.8,689.9 L1659.2,680.5 L1686.6,690.6 L1714.0,680.5 L1740.8,688.0 L1740.8,728.8 L118.5,728.8Z" fill="#7a3a50"/>
<path d="M118.5,693.5 L125.0,694.8 L152.4,693.5 L179.8,694.8 L207.2,693.0 L234.6,687.2 L262.0,692.2 L289.4,684.0 L316.8,692.2 L344.2,692.2 L371.6,688.5 L399.0,690.5 L426.4,694.2 L453.8,692.2 L481.1,694.8 L508.5,687.2 L535.9,692.2 L563.3,678.0 L590.7,695.5 L618.1,684.0 L645.5,692.2 L672.9,693.5 L700.3,692.2 L727.7,691.5 L755.1,690.5 L782.5,687.2 L809.9,691.5 L837.3,680.5 L864.7,684.8 L892.1,688.0 L919.5,683.5 L946.9,693.0 L974.3,694.0 L1001.7,690.5 L1029.1,694.8 L1056.5,687.2 L1083.9,690.5 L1111.3,681.5 L1138.7,689.0 L1166.0,686.0 L1193.4,691.0 L1220.8,692.2 L1248.2,690.5 L1275.6,692.2 L1303.0,694.8 L1330.4,686.4 L1357.8,690.8 L1385.2,673.6 L1412.6,691.5 L1440.0,681.2 L1467.4,691.5 L1494.8,691.1 L1522.2,692.4 L1549.6,691.8 L1577.0,692.4 L1604.4,684.0 L1631.8,691.1 L1659.2,681.7 L1686.6,691.8 L1714.0,681.7 L1740.8,689.2 L1740.8,728.8 L118.5,728.8Z" fill="#8aa898"/>
<path d="M118.5,695.5 L125.0,696.8 L152.4,695.5 L179.8,696.8 L207.2,695.0 L234.6,689.2 L262.0,694.2 L289.4,686.0 L316.8,694.2 L344.2,694.2 L371.6,690.5 L399.0,692.5 L426.4,696.2 L453.8,694.2 L481.1,696.8 L508.5,689.2 L535.9,694.2 L563.3,680.0 L590.7,697.5 L618.1,686.0 L645.5,694.2 L672.9,695.5 L700.3,694.2 L727.7,693.5 L755.1,692.5 L782.5,689.2 L809.9,693.5 L837.3,682.5 L864.7,686.8 L892.1,690.0 L919.5,685.5 L946.9,695.0 L974.3,696.0 L1001.7,692.5 L1029.1,696.8 L1056.5,689.2 L1083.9,692.5 L1111.3,683.5 L1138.7,691.0 L1166.0,688.0 L1193.4,693.0 L1220.8,694.2 L1248.2,692.5 L1275.6,694.2 L1303.0,696.8 L1330.4,688.4 L1357.8,692.8 L1385.2,675.6 L1412.6,693.5 L1440.0,683.2 L1467.4,693.5 L1494.8,693.1 L1522.2,694.4 L1549.6,693.8 L1577.0,694.4 L1604.4,686.0 L1631.8,693.1 L1659.2,683.7 L1686.6,693.8 L1714.0,683.7 L1740.8,691.2 L1740.8,728.8 L118.5,728.8Z" fill="#e8b012"/>
<path d="M118.5,709.7 L125.0,710.2 L152.4,709.7 L179.8,710.2 L207.2,709.5 L234.6,706.9 L262.0,709.1 L289.4,705.4 L316.8,709.1 L344.2,709.1 L371.6,707.4 L399.0,708.3 L426.4,710.0 L453.8,709.1 L481.1,710.2 L508.5,706.9 L535.9,709.1 L563.3,702.7 L590.7,710.6 L618.1,705.4 L645.5,709.1 L672.9,709.7 L700.3,709.1 L727.7,708.8 L755.1,708.3 L782.5,706.9 L809.9,708.8 L837.3,703.8 L864.7,705.7 L892.1,707.2 L919.5,705.2 L946.9,709.5 L974.3,709.9 L1001.7,708.3 L1029.1,710.2 L1056.5,706.9 L1083.9,708.3 L1111.3,704.3 L1138.7,707.6 L1166.0,706.3 L1193.4,708.5 L1220.8,709.1 L1248.2,708.3 L1275.6,709.1 L1303.0,710.2 L1330.4,706.5 L1357.8,708.5 L1385.2,700.7 L1412.6,708.8 L1440.0,704.1 L1467.4,708.8 L1494.8,708.6 L1522.2,709.2 L1549.6,708.9 L1577.0,709.2 L1604.4,705.4 L1631.8,708.6 L1659.2,704.4 L1686.6,708.9 L1714.0,704.4 L1740.8,707.7 L1740.8,728.8 L118.5,728.8Z" fill="#5a8a6a"/>
<path d="M118.5,710.7 L125.0,711.2 L152.4,710.7 L179.8,711.2 L207.2,710.5 L234.6,707.9 L262.0,710.1 L289.4,706.4 L316.8,710.1 L344.2,710.1 L371.6,708.4 L399.0,709.3 L426.4,711.0 L453.8,710.1 L481.1,711.2 L508.5,707.9 L535.9,710.1 L563.3,703.7 L590.7,711.6 L618.1,706.4 L645.5,710.1 L672.9,710.7 L700.3,710.1 L727.7,709.8 L755.1,709.3 L782.5,707.9 L809.9,709.8 L837.3,704.8 L864.7,706.7 L892.1,708.2 L919.5,706.2 L946.9,710.5 L974.3,710.9 L1001.7,709.3 L1029.1,711.2 L1056.5,707.9 L1083.9,709.3 L1111.3,705.3 L1138.7,708.6 L1166.0,707.3 L1193.4,709.5 L1220.8,710.1 L1248.2,709.3 L1275.6,710.1 L1303.0,711.2 L1330.4,707.5 L1357.8,709.5 L1385.2,701.7 L1412.6,709.8 L1440.0,705.1 L1467.4,709.8 L1494.8,709.6 L1522.2,710.2 L1549.6,709.9 L1577.0,710.2 L1604.4,706.4 L1631.8,709.6 L1659.2,705.4 L1686.6,709.9 L1714.0,705.4 L1740.8,708.7 L1740.8,728.8 L118.5,728.8Z" fill="#8cbde0"/>
<path d="M118.5,715.6 L125.0,716.1 L152.4,715.6 L179.8,716.1 L207.2,715.5 L234.6,713.4 L262.0,715.2 L289.4,712.3 L316.8,715.2 L344.2,715.2 L371.6,713.9 L399.0,714.6 L426.4,715.9 L453.8,715.2 L481.1,716.1 L508.5,713.4 L535.9,715.2 L563.3,710.2 L590.7,716.3 L618.1,712.3 L645.5,715.2 L672.9,715.6 L700.3,715.2 L727.7,714.9 L755.1,714.6 L782.5,713.4 L809.9,714.9 L837.3,711.1 L864.7,712.6 L892.1,713.7 L919.5,712.1 L946.9,715.5 L974.3,715.8 L1001.7,714.6 L1029.1,716.1 L1056.5,713.4 L1083.9,714.6 L1111.3,711.4 L1138.7,714.1 L1166.0,713.0 L1193.4,714.8 L1220.8,715.2 L1248.2,714.6 L1275.6,715.2 L1303.0,716.1 L1330.4,713.1 L1357.8,714.7 L1385.2,708.7 L1412.6,714.9 L1440.0,711.3 L1467.4,714.9 L1494.8,714.8 L1522.2,715.2 L1549.6,715.0 L1577.0,715.2 L1604.4,712.3 L1631.8,714.8 L1659.2,711.5 L1686.6,715.0 L1714.0,711.5 L1740.8,714.1 L1740.8,728.8 L118.5,728.8Z" fill="#3e4250"/>
<path d="M118.5,718.0 L125.0,718.5 L152.4,718.0 L179.8,718.5 L207.2,717.9 L234.6,715.8 L262.0,717.6 L289.4,714.7 L316.8,717.6 L344.2,717.6 L371.6,716.3 L399.0,717.0 L426.4,718.3 L453.8,717.6 L481.1,718.5 L508.5,715.8 L535.9,717.6 L563.3,712.6 L590.7,718.7 L618.1,714.7 L645.5,717.6 L672.9,718.0 L700.3,717.6 L727.7,717.3 L755.1,717.0 L782.5,715.8 L809.9,717.3 L837.3,713.5 L864.7,715.0 L892.1,716.1 L919.5,714.5 L946.9,717.9 L974.3,718.2 L1001.7,717.0 L1029.1,718.5 L1056.5,715.8 L1083.9,717.0 L1111.3,713.8 L1138.7,716.5 L1166.0,715.4 L1193.4,717.1 L1220.8,717.6 L1248.2,717.0 L1275.6,717.6 L1303.0,718.5 L1330.4,715.5 L1357.8,717.1 L1385.2,711.1 L1412.6,717.3 L1440.0,713.7 L1467.4,717.3 L1494.8,717.2 L1522.2,717.6 L1549.6,717.4 L1577.0,717.6 L1604.4,714.7 L1631.8,717.2 L1659.2,713.9 L1686.6,717.4 L1714.0,713.9 L1740.8,716.5 L1740.8,728.8 L118.5,728.8Z" fill="#d8503e"/>
<path d="M118.5,719.2 L125.0,719.7 L152.4,719.2 L179.8,719.7 L207.2,719.1 L234.6,717.0 L262.0,718.8 L289.4,715.9 L316.8,718.8 L344.2,718.8 L371.6,717.5 L399.0,718.2 L426.4,719.5 L453.8,718.8 L481.1,719.7 L508.5,717.0 L535.9,718.8 L563.3,713.8 L590.7,719.9 L618.1,715.9 L645.5,718.8 L672.9,719.2 L700.3,718.8 L727.7,718.5 L755.1,718.2 L782.5,717.0 L809.9,718.5 L837.3,714.7 L864.7,716.2 L892.1,717.3 L919.5,715.7 L946.9,719.1 L974.3,719.4 L1001.7,718.2 L1029.1,719.7 L1056.5,717.0 L1083.9,718.2 L1111.3,715.0 L1138.7,717.7 L1166.0,716.6 L1193.4,718.4 L1220.8,718.8 L1248.2,718.2 L1275.6,718.8 L1303.0,719.7 L1330.4,716.7 L1357.8,718.3 L1385.2,712.3 L1412.6,718.5 L1440.0,714.9 L1467.4,718.5 L1494.8,718.4 L1522.2,718.8 L1549.6,718.6 L1577.0,718.8 L1604.4,715.9 L1631.8,718.4 L1659.2,715.1 L1686.6,718.6 L1714.0,715.1 L1740.8,717.7 L1740.8,728.8 L118.5,728.8Z" fill="#b8683a"/>
<path d="M118.5,721.5 L125.0,722.0 L152.4,721.5 L179.8,722.0 L207.2,721.4 L234.6,719.3 L262.0,721.1 L289.4,718.2 L316.8,721.1 L344.2,721.1 L371.6,719.8 L399.0,720.5 L426.4,721.8 L453.8,721.1 L481.1,722.0 L508.5,719.3 L535.9,721.1 L563.3,716.1 L590.7,722.2 L618.1,718.2 L645.5,721.1 L672.9,721.5 L700.3,721.1 L727.7,720.8 L755.1,720.5 L782.5,719.3 L809.9,720.8 L837.3,717.0 L864.7,718.5 L892.1,719.6 L919.5,718.0 L946.9,721.4 L974.3,721.7 L1001.7,720.5 L1029.1,722.0 L1056.5,719.3 L1083.9,720.5 L1111.3,717.3 L1138.7,720.0 L1166.0,718.9 L1193.4,720.6 L1220.8,721.1 L1248.2,720.5 L1275.6,721.1 L1303.0,722.0 L1330.4,719.0 L1357.8,720.6 L1385.2,714.6 L1412.6,720.8 L1440.0,717.2 L1467.4,720.8 L1494.8,720.7 L1522.2,721.1 L1549.6,720.9 L1577.0,721.1 L1604.4,718.2 L1631.8,720.7 L1659.2,717.4 L1686.6,720.9 L1714.0,717.4 L1740.8,720.0 L1740.8,728.8 L118.5,728.8Z" fill="#d8503e"/>
<path d="M118.5,725.0 L125.0,725.0 L152.4,725.0 L179.8,725.0 L207.2,725.0 L234.6,725.0 L262.0,725.0 L289.4,725.0 L316.8,725.0 L344.2,725.0 L371.6,725.0 L399.0,725.0 L426.4,725.0 L453.8,725.0 L481.1,725.0 L508.5,725.0 L535.9,725.0 L563.3,725.0 L590.7,725.0 L618.1,725.0 L645.5,725.0 L672.9,725.0 L700.3,725.0 L727.7,725.0 L755.1,725.0 L782.5,725.0 L809.9,725.0 L837.3,725.0 L864.7,725.0 L892.1,725.0 L919.5,725.0 L946.9,725.0 L974.3,725.0 L1001.7,725.0 L1029.1,725.0 L1056.5,725.0 L1083.9,725.0 L1111.3,725.0 L1138.7,725.0 L1166.0,725.0 L1193.4,725.0 L1220.8,725.0 L1248.2,725.0 L1275.6,725.0 L1303.0,725.0 L1330.4,725.0 L1357.8,725.0 L1385.2,725.0 L1412.6,725.0 L1440.0,725.0 L1467.4,725.0 L1494.8,725.0 L1522.2,725.0 L1549.6,725.0 L1577.0,725.0 L1604.4,725.0 L1631.8,725.0 L1659.2,725.0 L1686.6,725.0 L1714.0,725.0 L1740.8,725.0 L1740.8,728.8 L118.5,728.8Z" fill="#73bfd8"/>
<path d="M1740.8,729 H1761" stroke="#36383e" stroke-width="1.5"/>
</svg>
<div class="t" style="left:20px;width:88px;text-align:right;top:399.5px;font-size:24px;color:#d2d2e0">2</div>
<div class="t" style="left:20px;width:88px;text-align:right;top:478.5px;font-size:24px;color:#d2d2e0">1.50</div>
<div class="t" style="left:20px;width:88px;text-align:right;top:558.0px;font-size:24px;color:#d2d2e0">1</div>
<div class="t" style="left:20px;width:88px;text-align:right;top:637.2px;font-size:24px;color:#d2d2e0">0.500</div>
<div class="t" style="left:20px;width:88px;text-align:right;top:717.0px;font-size:24px;color:#d2d2e0">0</div>
<div class="t" style="left:184.6px;width:100px;text-align:center;top:742.3px;font-size:24.4px;color:#d2d2e0">08:20</div>
<div class="t" style="left:321.6px;width:100px;text-align:center;top:742.3px;font-size:24.4px;color:#d2d2e0">08:25</div>
<div class="t" style="left:458.6px;width:100px;text-align:center;top:742.3px;font-size:24.4px;color:#d2d2e0">08:30</div>
<div class="t" style="left:595.5px;width:100px;text-align:center;top:742.3px;font-size:24.4px;color:#d2d2e0">08:35</div>
<div class="t" style="left:732.5px;width:100px;text-align:center;top:742.3px;font-size:24.4px;color:#d2d2e0">08:40</div>
<div class="t" style="left:869.5px;width:100px;text-align:center;top:742.3px;font-size:24.4px;color:#d2d2e0">08:45</div>
<div class="t" style="left:1006.5px;width:100px;text-align:center;top:742.3px;font-size:24.4px;color:#d2d2e0">08:50</div>
<div class="t" style="left:1143.5px;width:100px;text-align:center;top:742.3px;font-size:24.4px;color:#d2d2e0">08:55</div>
<div class="t" style="left:1280.4px;width:100px;text-align:center;top:742.3px;font-size:24.4px;color:#d2d2e0">09:00</div>
<div class="t" style="left:1417.4px;width:100px;text-align:center;top:742.3px;font-size:24.4px;color:#d2d2e0">09:05</div>
<div class="t" style="left:1554.4px;width:100px;text-align:center;top:742.3px;font-size:24.4px;color:#d2d2e0">09:10</div>
<div class="t" style="left:1691.4px;width:100px;text-align:center;top:742.3px;font-size:24.4px;color:#d2d2e0">09:15</div>
<div class="a" style="left:1790px;top:400px;width:800px;height:372px;overflow:hidden">
<div class="a" style="left:16px;top:27.7px;width:26px;height:8.2px;border-radius:4px;background:#f2495c"></div>
<div class="t" style="left:60px;top:18.2px;font-size:24px;letter-spacing:0.4px;color:#9a9aa6">max capacity</div>
<div class="a" style="left:12px;top:55.0px;width:771px;height:47.7px;background:#20232a"></div>
<div class="a" style="left:16px;top:76.6px;width:26px;height:8.2px;border-radius:4px;background:#f2c43c"></div>
<div class="t" style="left:60px;top:67.1px;font-size:24px;letter-spacing:0.4px;color:#d2d2e0">alertmanager-proxy-f5f48df76-mmj5s</div>
<div class="a" style="left:16px;top:125.5px;width:26px;height:8.2px;border-radius:4px;background:#5cc9e3"></div>
<div class="t" style="left:60px;top:116.0px;font-size:24px;letter-spacing:0.4px;color:#d2d2e0">calico-node-4dkk4</div>
<div class="a" style="left:12px;top:152.8px;width:771px;height:47.7px;background:#20232a"></div>
<div class="a" style="left:16px;top:174.4px;width:26px;height:8.2px;border-radius:4px;background:#f58b3c"></div>
<div class="t" style="left:60px;top:164.9px;font-size:24px;letter-spacing:0.4px;color:#d2d2e0">details-new-5cd57cbd49-4lktp</div>
<div class="a" style="left:16px;top:223.3px;width:26px;height:8.2px;border-radius:4px;background:#e0503e"></div>
<div class="t" style="left:60px;top:213.8px;font-size:24px;letter-spacing:0.4px;color:#d2d2e0">devops-agent-argocd-application-controller-0</div>
<div class="a" style="left:12px;top:250.6px;width:771px;height:47.7px;background:#20232a"></div>
<div class="a" style="left:16px;top:272.2px;width:26px;height:8.2px;border-radius:4px;background:#3b86dc"></div>
<div class="t" style="left:60px;top:262.7px;font-size:24px;letter-spacing:0.4px;color:#d2d2e0">devops-agent-argocd-applicationset-controller-8569cdbf-ht5wb</div>
<div class="a" style="left:16px;top:321.1px;width:26px;height:8.2px;border-radius:4px;background:#c455c4"></div>
<div class="t" style="left:60px;top:311.6px;font-size:24px;letter-spacing:0.4px;color:#d2d2e0">devops-agent-argocd-dex-server-65fb4747c7-v4dwv</div>
<div class="a" style="left:12px;top:348.4px;width:771px;height:47.7px;background:#20232a"></div>
<div class="a" style="left:16px;top:370.0px;width:26px;height:8.2px;border-radius:4px;background:#5f4a8c"></div>
<div class="t" style="left:60px;top:360.5px;font-size:24px;letter-spacing:0.4px;color:#d2d2e0">devops-agent-argocd-repo-server-686ddf4456-kbnnb</div>
</div>
<div class="a" style="left:2565.8px;top:407.4px;width:11px;height:33.7px;border-radius:6px;background:#9c9ca2"></div>

<!-- panel 2 -->
<div class="a" style="left:28.8px;top:873.2px;width:2570px;height:470.2px;background:#181b1f;border:2px solid #2e3136;border-radius:3px"></div>
<div class="t" style="left:46px;top:890.7px;font-size:26.4px;-webkit-text-stroke:0.5px #d8d8e4;color:#d8d8e4">CPU Quota</div>
<svg style="left:209.5px;top:888px" width="34" height="32" viewBox="0 0 34 32"><path d="M16.8,4.2 C17.6,4.2 18.2,4.6 18.6,5.3 L29.6,24.6 C30.4,26 29.4,27.6 27.8,27.6 H5.8 C4.2,27.6 3.2,26 4,24.6 L15,5.3 C15.4,4.6 16,4.2 16.8,4.2 Z" fill="none" stroke="#f1a83b" stroke-width="2.6" stroke-linejoin="round"/><path d="M16.8,11.5 V19" stroke="#f1a83b" stroke-width="2.6" stroke-linecap="round"/><circle cx="16.8" cy="23" r="1.5" fill="#f1a83b"/></svg>
<div class="a" style="left:31px;top:933.3px;width:2566px;height:3.6px;background:#111215"></div>
<div class="a" style="left:31px;top:936.9px;width:2566px;height:43.9px;background:#22252b"></div>
<div class="a" style="left:31px;top:980.8px;width:2566px;height:3px;background:#111215"></div>
<div class="t" style="left:59px;top:947.4px;font-size:26.41px;-webkit-text-stroke:0.75px #3d9fe0;color:#3d9fe0">Pod</div>
<div class="t" style="left:1252.5px;top:947.4px;font-size:26.42px;-webkit-text-stroke:0.75px #3d9fe0;color:#3d9fe0">CPU Usage</div>
<div class="t" style="left:1497.5px;top:947.2px;font-size:26.61px;-webkit-text-stroke:0.75px #3d9fe0;color:#3d9fe0">CPU Requests</div>
<div class="t" style="left:1785px;top:947.2px;font-size:26.67px;-webkit-text-stroke:0.75px #3d9fe0;color:#3d9fe0">CPU Requests %</div>
<div class="t" style="left:2113px;top:947.0px;font-size:26.9px;-webkit-text-stroke:0.75px #3d9fe0;color:#3d9fe0">CPU Limits</div>
<div class="t" style="left:2350.5px;top:947.0px;font-size:26.83px;-webkit-text-stroke:0.75px #3d9fe0;color:#3d9fe0">CPU Limits %</div>
<div class="a" style="left:31px;top:1053.1px;width:2566px;height:3.3px;background:#111215"></div>
<div class="a" style="left:31px;top:1119.8px;width:2566px;height:3.3px;background:#111215"></div>
<div class="a" style="left:31px;top:1186.5px;width:2566px;height:3.3px;background:#111215"></div>
<div class="a" style="left:31px;top:1253.2px;width:2566px;height:3.3px;background:#111215"></div>
<div class="a" style="left:31px;top:1319.9px;width:2566px;height:3.3px;background:#111215"></div>
<div class="t" style="left:59px;top:1007.7px;font-size:27px;letter-spacing:0.75px;color:#d8d8e4">wordpress-v1-5b667456b8-977x7</div>
<div class="t" style="left:1254.5px;top:1007.7px;font-size:27px;color:#d8d8e4">0.02</div>
<div class="t" style="left:1499.5px;top:1007.7px;font-size:27px;color:#d8d8e4">0.10</div>
<div class="t" style="left:1787px;top:1007.7px;font-size:27px;color:#d8d8e4">19.11%</div>
<div class="t" style="left:2115.5px;top:1007.7px;font-size:27px;color:#d8d8e4">2.00</div>
<div class="t" style="left:2352px;top:1007.7px;font-size:27px;color:#d8d8e4">0.96%</div>
<div class="t" style="left:59px;top:1074.4px;font-size:27px;letter-spacing:0.75px;color:#d8d8e4">reviews-v3-6d69dd8484-ppdfx</div>
<div class="t" style="left:1254.5px;top:1074.4px;font-size:27px;color:#d8d8e4">0.02</div>
<div class="t" style="left:1499.5px;top:1074.4px;font-size:27px;color:#d8d8e4">0.11</div>
<div class="t" style="left:1787px;top:1074.4px;font-size:27px;color:#d8d8e4">18.65%</div>
<div class="t" style="left:2115.5px;top:1074.4px;font-size:27px;color:#d8d8e4">3.00</div>
<div class="t" style="left:2352px;top:1074.4px;font-size:27px;color:#d8d8e4">0.68%</div>
<div class="t" style="left:59px;top:1141.1px;font-size:27px;letter-spacing:0.75px;color:#d8d8e4">reviews-v1-554fcc8dc4-svp2f</div>
<div class="t" style="left:1254.5px;top:1141.1px;font-size:27px;color:#d8d8e4">0.02</div>
<div class="t" style="left:1499.5px;top:1141.1px;font-size:27px;color:#d8d8e4">0.11</div>
<div class="t" style="left:1787px;top:1141.1px;font-size:27px;color:#d8d8e4">15.02%</div>
<div class="t" style="left:2115.5px;top:1141.1px;font-size:27px;color:#d8d8e4">3.00</div>
<div class="t" style="left:2352px;top:1141.1px;font-size:27px;color:#d8d8e4">0.55%</div>
<div class="t" style="left:59px;top:1207.8px;font-size:27px;letter-spacing:0.75px;color:#d8d8e4">ratings-v1-5c445c74dc-46w5m</div>
<div class="t" style="left:1254.5px;top:1207.8px;font-size:27px;color:#d8d8e4">0.01</div>
<div class="t" style="left:1499.5px;top:1207.8px;font-size:27px;color:#d8d8e4">0.11</div>
<div class="t" style="left:1787px;top:1207.8px;font-size:27px;color:#d8d8e4">10.24%</div>
<div class="t" style="left:2115.5px;top:1207.8px;font-size:27px;color:#d8d8e4">3.00</div>
<div class="t" style="left:2352px;top:1207.8px;font-size:27px;color:#d8d8e4">0.38%</div>
<div class="t" style="left:59px;top:1274.5px;font-size:27px;letter-spacing:0.75px;color:#d8d8e4">ratings-new-546f6786cc-bhlx2</div>
<div class="t" style="left:1254.5px;top:1274.5px;font-size:27px;color:#d8d8e4">0.00</div>
<div class="t" style="left:1499.5px;top:1274.5px;font-size:27px;color:#d8d8e4">-</div>
<div class="t" style="left:1787px;top:1274.5px;font-size:27px;color:#d8d8e4">-</div>
<div class="t" style="left:2115.5px;top:1274.5px;font-size:27px;color:#d8d8e4">-</div>
<div class="t" style="left:2352px;top:1274.5px;font-size:27px;color:#d8d8e4">-</div>
<div class="a" style="left:1222.5px;top:990.2px;width:2.4px;height:351px;background:#111215"></div>
<div class="a" style="left:1467.3px;top:990.2px;width:2.4px;height:351px;background:#111215"></div>
<div class="a" style="left:1755.2px;top:990.2px;width:2.4px;height:351px;background:#111215"></div>
<div class="a" style="left:2083.5px;top:990.2px;width:2.4px;height:351px;background:#111215"></div>
<div class="a" style="left:2320.2px;top:990.2px;width:2.4px;height:351px;background:#111215"></div>
<div class="a" style="left:2580.4px;top:989.8px;width:11.4px;height:28.6px;border-radius:6px;background:#9c9ca2"></div>

<div class="a" style="left:2611.5px;top:149.8px;width:11px;height:709.5px;border-radius:6px;background:#86878b"></div>
</body></html>
